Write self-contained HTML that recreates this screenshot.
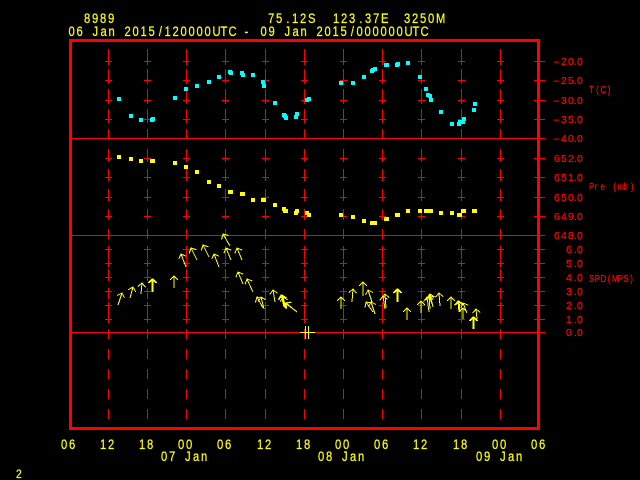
<!DOCTYPE html>
<html>
<head>
<meta charset="utf-8">
<title>8989</title>
<style>
html,body{margin:0;padding:0;background:#000;width:640px;height:480px;overflow:hidden}
svg{display:block}
.g{stroke:#f00;stroke-width:1;fill:none;shape-rendering:crispEdges}
.y text{fill:#ff0;stroke:#ff0;stroke-width:.25;font-family:"Liberation Sans",sans-serif;font-size:14px}
.r text{fill:#f00;stroke:#f00;stroke-width:.25;font-family:"Liberation Sans",sans-serif;font-size:10.5px}
.arr path{stroke:#ff0;stroke-width:1;fill:none;shape-rendering:crispEdges;marker-end:url(#a)}
</style>
</head>
<body>
<svg width="640" height="480" viewBox="0 0 640 480" xmlns="http://www.w3.org/2000/svg">
<defs>
<marker id="a" markerUnits="userSpaceOnUse" orient="auto" overflow="visible" markerWidth="12" markerHeight="12" refX="0" refY="0">
<path d="M-4,-4 L0,0 L-4,4" fill="none" stroke="#ff0" stroke-width="1" shape-rendering="crispEdges"/>
</marker>
<g id="col" class="g">
<path stroke-dasharray="10 10" d="M.5 49V419"/>
<path d="M-3 61.5H4M.5 58V65M-3 80.5H4M.5 77V84M-3 100.5H4M.5 97V104M-3 119.5H4M.5 116V123M-3 158.5H4M.5 155V162M-3 177.5H4M.5 174V181M-3 197.5H4M.5 194V201M-3 216.5H4M.5 213V220M-3 249.5H4M.5 246V253M-3 263.5H4M.5 260V267M-3 277.5H4M.5 274V281M-3 291.5H4M.5 288V295M-3 305.5H4M.5 302V309M-3 319.5H4M.5 316V323"/>
</g>
</defs>
<rect width="640" height="480" fill="#000"/>
<use href="#col" x="108"/><use href="#col" x="147"/><use href="#col" x="186"/><use href="#col" x="225"/><use href="#col" x="265"/><use href="#col" x="304"/><use href="#col" x="343"/><use href="#col" x="382"/><use href="#col" x="421"/><use href="#col" x="461"/><use href="#col" x="500"/>
<path class="g" d="M72 138.5H545M72 235.5H545M72 332.5H545"/>
<path class="g" d="M534 61.5H545M534 80.5H545M534 100.5H545M534 119.5H545M534 158.5H545M534 177.5H545M534 197.5H545M534 216.5H545M534 249.5H545M534 263.5H545M534 277.5H545M534 291.5H545M534 305.5H545M534 319.5H545"/>
<rect x="70.5" y="40.5" width="468" height="388" fill="none" stroke="#f00" stroke-width="3" shape-rendering="crispEdges"/>

<g fill="#0ff" shape-rendering="crispEdges">
<path d="M117 97h4v4h-4zM129 114h4v4h-4zM139 118h4v4h-4zM150 118h4v4h-4zM151 117h4v4h-4zM173 96h4v4h-4zM184 87h4v4h-4zM195 84h4v4h-4zM207 80h4v4h-4zM217 75h4v4h-4zM228 70h4v4h-4zM229 71h4v4h-4zM240 71h4v4h-4zM241 73h4v4h-4zM251 73h4v4h-4zM261 80h4v4h-4zM262 84h4v4h-4zM273 101h4v4h-4zM282 113h4v4h-4zM283 114h4v4h-4zM284 116h4v4h-4zM294 115h4v4h-4zM295 112h4v4h-4zM305 98h4v4h-4zM307 97h4v4h-4z"/>
<path d="M339 81h4v4h-4zM351 81h4v4h-4zM362 75h4v4h-4zM370 69h4v4h-4zM371 68h4v4h-4zM373 67h4v4h-4zM384 63h4v4h-4zM385 63h4v4h-4zM395 63h4v4h-4zM396 62h4v4h-4zM406 61h4v4h-4zM418 75h4v4h-4zM424 87h4v4h-4zM426 93h4v4h-4zM428 94h4v4h-4zM429 98h4v4h-4zM439 110h4v4h-4zM450 122h4v4h-4zM457 122h4v4h-4zM458 120h4v4h-4zM461 120h4v4h-4zM462 117h4v4h-4zM472 108h4v4h-4zM473 102h4v4h-4z"/>
</g>
<g fill="#ff0" shape-rendering="crispEdges">
<path d="M117 155h4v4h-4zM129 157h4v4h-4zM139 159h4v4h-4zM150 159h4v4h-4zM151 159h4v4h-4zM173 161h4v4h-4zM184 165h4v4h-4zM195 170h4v4h-4zM207 180h4v4h-4zM217 184h4v4h-4zM228 190h4v4h-4zM229 190h4v4h-4zM240 192h4v4h-4zM241 192h4v4h-4zM251 198h4v4h-4zM261 198h4v4h-4zM262 198h4v4h-4zM273 203h4v4h-4zM282 207h4v4h-4zM283 209h4v4h-4zM284 209h4v4h-4zM294 211h4v4h-4zM295 209h4v4h-4zM305 211h4v4h-4zM307 213h4v4h-4z"/>
<path d="M339 213h4v4h-4zM351 215h4v4h-4zM362 219h4v4h-4zM370 221h4v4h-4zM371 221h4v4h-4zM373 221h4v4h-4zM384 217h4v4h-4zM385 217h4v4h-4zM395 213h4v4h-4zM396 213h4v4h-4zM406 209h4v4h-4zM418 209h4v4h-4zM424 209h4v4h-4zM426 209h4v4h-4zM428 209h4v4h-4zM429 209h4v4h-4zM439 211h4v4h-4zM450 211h4v4h-4zM457 213h4v4h-4zM458 213h4v4h-4zM461 209h4v4h-4zM462 209h4v4h-4zM472 209h4v4h-4zM473 209h4v4h-4z"/>
</g>

<g class="arr">
<path d="M118 305L122 293"/><path d="M130 298L133 287"/><path d="M141 294L142 283"/>
<path d="M152 292L152 279"/><path d="M153 292L153 279"/>
<path d="M174 288L174 276"/><path d="M186 267L181 254"/><path d="M197 260L191 248"/>
<path d="M209 257L203 245"/><path d="M219 267L214 254"/><path d="M230 246L223 234"/>
<path d="M231 260L226 248"/><path d="M242 260L237 248"/><path d="M243 284L238 272"/>
<path d="M253 292L247 279"/><path d="M263 308L257 297"/><path d="M264 309L261 297"/>
<path d="M275 302L273 290"/>
<path d="M284 307L281 295"/><path d="M285 308L282 295"/><path d="M286 309L283 297"/>
<path d="M296 311L285 303"/><path d="M297 312L286 303"/>
<path d="M341 309L341 297"/><path d="M352 302L353 289"/><path d="M363 296L363 282"/>
<path d="M372 302L368 290"/><path d="M373 312L366 302"/><path d="M375 314L371 302"/>
<path d="M385 309L383 296"/><path d="M386 308L385 294"/>
<path d="M397 302L397 289"/><path d="M398 302L398 289"/>
<path d="M407 320L407 308"/>
<path d="M421 313L421 301"/><path d="M429 312L427 297"/><path d="M430 309L429 296"/>
<path d="M433 307L430 294"/><path d="M432 304L429 295"/>
<path d="M440 306L439 293"/><path d="M451 309L451 297"/>
<path d="M459 312L458 301"/><path d="M460 312L459 301"/>
<path d="M463 319L463 308"/><path d="M467 313L463 303"/>
<path d="M473 329L473 317"/><path d="M474 329L474 317"/><path d="M477 319L476 309"/>
</g>
<path d="M300 332.5H315M305.5 326V339M308.5 326V339" stroke="#ff0" stroke-width="1" fill="none" shape-rendering="crispEdges"/>

<g class="y">
<text transform="translate(84,23) scale(.8,1)" x="0 10 20 30">8989</text>
<text transform="translate(268,23) scale(.8,1)" x="0 10 23 30 40 50">75.12S</text>
<text transform="translate(333,23) scale(.8,1)" x="0 10 20 33 40 50 60">123.37E</text>
<text transform="translate(404,23) scale(.8,1)" x="0 10 20 30 40">3250M</text>
<text transform="translate(68.5,36) scale(.8,1)" x="0 10 20 30 40 50 60 70 80 90 100 113 120 130 140 150 160 170 180 190 200 210 220 230 240 250 260 270 280 290 300 310 320 330 340 353 360 370 380 390 400 410 420 430 440">06 Jan 2015/120000UTC - 09 Jan 2015/000000UTC</text>
<text transform="translate(61,449) scale(.8,1)" x="0 10">06</text>
<text transform="translate(100,449) scale(.8,1)" x="0 10">12</text>
<text transform="translate(139,449) scale(.8,1)" x="0 10">18</text>
<text transform="translate(178,449) scale(.8,1)" x="0 10">00</text>
<text transform="translate(217,449) scale(.8,1)" x="0 10">06</text>
<text transform="translate(257,449) scale(.8,1)" x="0 10">12</text>
<text transform="translate(296,449) scale(.8,1)" x="0 10">18</text>
<text transform="translate(335,449) scale(.8,1)" x="0 10">00</text>
<text transform="translate(374,449) scale(.8,1)" x="0 10">06</text>
<text transform="translate(413,449) scale(.8,1)" x="0 10">12</text>
<text transform="translate(453,449) scale(.8,1)" x="0 10">18</text>
<text transform="translate(492,449) scale(.8,1)" x="0 10">00</text>
<text transform="translate(531,449) scale(.8,1)" x="0 10">06</text>
<text transform="translate(161,461) scale(.8,1)" x="0 10 20 30 40 50">07 Jan</text>
<text transform="translate(318,461) scale(.8,1)" x="0 10 20 30 40 50">08 Jan</text>
<text transform="translate(476,461) scale(.8,1)" x="0 10 20 30 40 50">09 Jan</text>
<text transform="translate(16,478) scale(.85,1)" style="font-size:12px">2</text>
</g>

<g class="r">
<text transform="translate(553,65) scale(2,1)">-</text>
<text transform="translate(554,65)" x="7 14 20 23">20.0</text>
<text transform="translate(553,84) scale(2,1)">-</text>
<text transform="translate(554,84)" x="7 14 20 23">25.0</text>
<text transform="translate(553,104) scale(2,1)">-</text>
<text transform="translate(554,104)" x="7 14 20 23">30.0</text>
<text transform="translate(553,123) scale(2,1)">-</text>
<text transform="translate(554,123)" x="7 14 20 23">35.0</text>
<text transform="translate(553,142) scale(2,1)">-</text>
<text transform="translate(554,142)" x="7 14 20 23">40.0</text>
<text transform="translate(554,162)" x="0 7 14 20 23">652.0</text>
<text transform="translate(554,181)" x="0 7 14 20 23">651.0</text>
<text transform="translate(554,201)" x="0 7 14 20 23">650.0</text>
<text transform="translate(554,220)" x="0 7 14 20 23">649.0</text>
<text transform="translate(554,239)" x="0 7 14 20 23">648.0</text>
<text transform="translate(554,253)" x="12 20 23">6.0</text>
<text transform="translate(554,267)" x="12 20 23">5.0</text>
<text transform="translate(554,281)" x="12 20 23">4.0</text>
<text transform="translate(554,295)" x="12 20 23">3.0</text>
<text transform="translate(554,309)" x="12 20 23">2.0</text>
<text transform="translate(554,323)" x="12 20 23">1.0</text>
<text transform="translate(554,336)" x="12 20 23">0.0</text>
<text transform="translate(589,93) scale(.75,1)" x="0 9.5 15.3 25">T(C)</text>
<text transform="translate(589,190) scale(.75,1)" x="0 7.67 15.3 23 32.5 38 46 56">Pre (mb)</text>
<text transform="translate(589,282) scale(.75,1)" x="0 7.67 15.3 25 30.7 38.3 46 55">SPD(MPS)</text>
</g>
</svg>
</body>
</html>
